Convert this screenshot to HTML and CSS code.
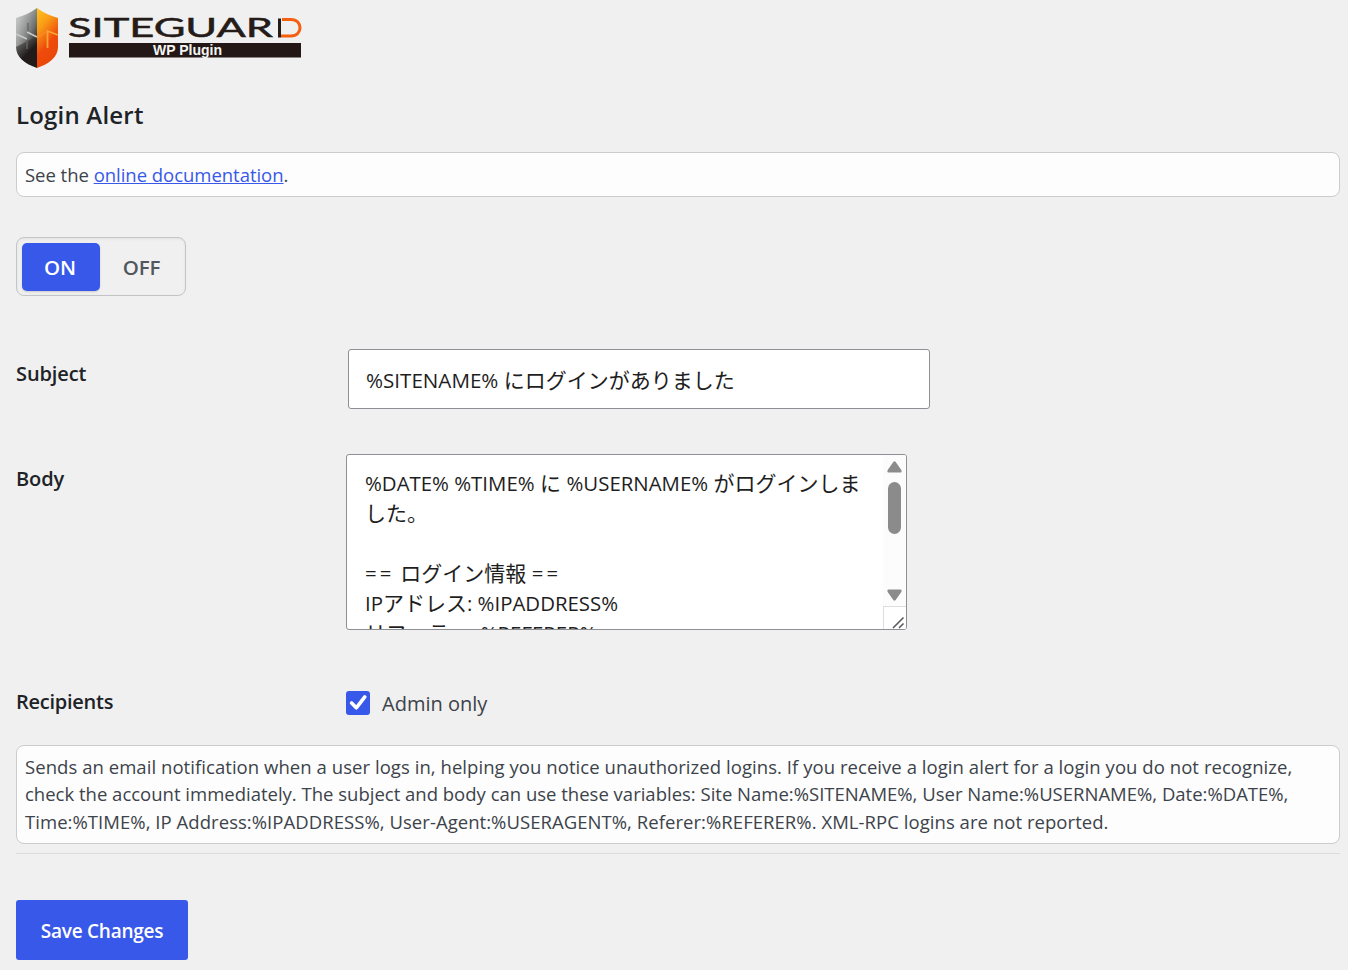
FILE: index.html
```html
<!DOCTYPE html>
<html lang="en">
<head>
	<meta charset="utf-8">
	<title>Login Alert</title>
	<link rel="stylesheet" href="styles.css">
</head>

<body>
	<div class="wrap">
		<svg class="logo" width="288" height="62" viewBox="0 0 288 62">
			<defs>
				<linearGradient id="steel" x1="0" y1="0" x2="0.35" y2="1">
					<stop offset="0" stop-color="#b9bbba"/>
					<stop offset="0.3" stop-color="#8b8d8d"/>
					<stop offset="0.55" stop-color="#646565"/>
					<stop offset="0.85" stop-color="#211c1b"/>
				</linearGradient>
				<linearGradient id="shine" x1="0" y1="0" x2="1" y2="0">
					<stop offset="0" stop-color="#fff" stop-opacity="0.4"/>
					<stop offset="1" stop-color="#fff" stop-opacity="0"/>
				</linearGradient>
				<linearGradient id="flame" x1="0" y1="0" x2="0.4" y2="1">
					<stop offset="0" stop-color="#ffc51c"/>
					<stop offset="0.35" stop-color="#f99a16"/>
					<stop offset="0.7" stop-color="#ee4b0d"/>
					<stop offset="1" stop-color="#ea4608"/>
				</linearGradient>
			</defs>
			<path fill="url(#steel)" d="M21 0C14 5 7 8 0 10V39C0 49 9 56 21 60Z"/>
			<path fill="url(#shine)" d="M21 0C14 5 7 8 0 10V39L21 28Z"/>
			<path fill="url(#flame)" d="M21 0C28 5 35 8 42 10V39C42 49 33 56 21 60Z"/>
			<path fill="none" stroke="#666" stroke-width="1.4" d="M12 15V25M11 30V41"/>
			<path fill="none" stroke="#c8caca" stroke-width="1.6" d="M0 26L11 31M11 24L21 29"/>
			<path fill="none" stroke="#f9a533" stroke-width="1.8" d="M31.500 40V23L42 27"/>
			<path fill="none" stroke="#fb8a2b" stroke-width="1.300" d="M22 29L31 23.500"/>
			<text class="logo-name" x="52" y="29" textLength="205" lengthAdjust="spacingAndGlyphs">SITEGUAR</text>
			<path fill="none" stroke="#251b18" stroke-width="3" d="M263.500 10.500V29.500"/>
			<path fill="none" stroke="#f4600f" stroke-width="3" d="M266 11.500H275C287 11.500 287 28 275 28H265"/>
			<rect x="53" y="35" width="232" height="14.500" fill="#231815"/>
			<text class="logo-sub" x="137" y="47" textLength="69" lengthAdjust="spacingAndGlyphs">WP Plugin</text>
		</svg>

		<h1>Login Alert</h1>

		<div class="description doc">See the <a href="#">online documentation</a>.</div>

		<div class="switch">
			<button type="button" class="switch-btn active">ON</button>
			<button type="button" class="switch-btn">OFF</button>
		</div>

		<div class="row row-subject">
			<div class="label">Subject</div>
			<div class="subject" role="textbox"><span class="latin">%SITENAME%</span> にログインがありました</div>
		</div>

		<div class="row row-body">
			<div class="label">Body</div>
			<div class="textarea">
				<div class="textarea-text" role="textbox"><span class="latin">%DATE% %TIME%</span> に <span class="latin">%USERNAME%</span> がログインしま<br>した。<br><br><span class="latin rule">==</span> ログイン情報 <span class="latin rule">==</span><br><span class="latin">IP</span>アドレス<span class="latin">: %IPADDRESS%</span><br>リファラー<span class="latin">: %REFERER%</span></div>
				<div class="scrollbar">
					<svg width="15" height="12" viewBox="0 0 15 12"><path fill="#8b8b8b" d="M6.300 1Q7.500 -0.300 8.700 1L14.300 9Q15.200 11.500 13.500 11.500H1.500Q-0.200 11.500 0.700 9Z"/></svg>
					<div class="thumb"></div>
					<svg class="down" width="15" height="12" viewBox="0 0 15 12"><path fill="#8b8b8b" d="M6.300 11Q7.500 12.300 8.700 11L14.300 3Q15.200 0.500 13.500 0.500H1.500Q-0.200 0.500 0.700 3Z"/></svg>
					<div class="corner">
						<svg width="13" height="13" viewBox="0 0 13 13"><path fill="none" stroke="#555" stroke-width="1.500" d="M1 12L11.500 1.500M7 12L11.500 7.500"/></svg>
					</div>
				</div>
			</div>
		</div>

		<div class="row row-recipients">
			<div class="label">Recipients</div>
			<label class="check">
				<span class="checkbox">
					<svg width="24" height="24" viewBox="0 0 24 24"><path fill="none" stroke="#fff" stroke-width="3.600" d="M5.600 12L10.300 16.800L18.800 5.800" stroke-linecap="round" stroke-linejoin="round"/></svg>
				</span>
				<span class="check-text">Admin only</span>
			</label>
		</div>

		<div class="description help"><span class="first-line">Sends an email notification when a user logs in, helping you notice unauthorized logins. If you receive a login alert for a login you do not recognize,</span><br>check the account immediately. The subject and body can use these variables: Site Name:%SITENAME%, User Name:%USERNAME%, Date:%DATE%,<br><span class="last-line">Time:%TIME%, IP Address:%IPADDRESS%, User-Agent:%USERAGENT%, Referer:%REFERER%. XML-RPC logins are not reported.</span></div>

		<hr>

		<button type="submit" class="save">Save Changes</button>
	</div>
</body>
</html>
```
FILE: styles.css
```css
body {
	margin: 0;
	background: #f0f0f0;
	color: #3c434a;
	font-family: "Open Sans", "Noto Sans CJK JP", sans-serif;
	font-size: 18.5px;
}

.wrap {
	padding: 8px 8px 0 16px;
}

.logo {
	display: block;
}

.logo-name {
	font-family: Lato, sans-serif;
	font-size: 26.5px;
	fill: #251b18;
	stroke: #251b18;
	stroke-width: 0.5px;
}

.logo-sub {
	font-family: "Liberation Sans", sans-serif;
	font-size: 14px;
	font-weight: bold;
	fill: #f4f4f4;
}

h1 {
	margin: 27px 0 0;
	color: #1d2327;
	font-size: 24px;
	font-weight: 600;
	line-height: 36px;
	letter-spacing: 0.2px;
}

.description {
	box-sizing: border-box;
	padding: 8px;
	background: #fdfdfd;
	border: 1px solid #ccc;
	border-radius: 8px;
	line-height: 27.4px;
	white-space: nowrap;
}

.doc {
	height: 45px;
	margin-top: 19px;
	letter-spacing: -0.03px;
}

a {
	color: #3858e9;
}

.switch {
	display: flex;
	box-sizing: border-box;
	width: 170px;
	height: 59px;
	margin-top: 40px;
	padding: 5px;
	border: 1px solid #c3c4c7;
	border-radius: 8px;
	box-shadow: inset 0 1px 3px rgba(0, 0, 0, 0.06);
}

.switch-btn {
	width: 78px;
	height: 48px;
	padding: 0 0 0 5px;
	border: none;
	border-radius: 5px;
	background: none;
	color: #50575e;
	font: 600 20.5px "Open Sans", sans-serif;
	letter-spacing: -0.2px;
}

.switch-btn.active {
	padding: 0 2px 0 0;
	background: #3858e9;
	color: #fff;
	letter-spacing: 0;
	box-shadow: 0 1px 2px rgba(0, 0, 0, 0.15);
}

.row {
	display: flex;
	align-items: flex-start;
}

.label {
	width: 330px;
	color: #1d2327;
	font-size: 20px;
	font-weight: 600;
	line-height: 28px;
	letter-spacing: -0.1px;
}

.row-subject {
	margin-top: 53px;
}

.row-subject .label {
	width: 332px;
	padding-top: 11px;
}

.subject {
	box-sizing: border-box;
	width: 582px;
	height: 60px;
	padding: 1px 17px;
	background: #fff;
	border: 1px solid #8c8f94;
	border-radius: 3px;
	color: #1e1e1e;
	font-size: 21px;
	line-height: 58px;
}

.subject .latin {
	font-size: 20.6px;
}

.latin {
	font-size: 20.4px;
}

.textarea-text .rule {
	letter-spacing: 3.2px;
}

.row-body {
	margin-top: 45px;
}

.row-body .label {
	padding-top: 11px;
}

.textarea {
	display: flex;
	box-sizing: border-box;
	width: 561px;
	height: 176px;
	background: #fff;
	border: 1px solid #8c8f94;
	border-radius: 3px;
	overflow: hidden;
}

.textarea-text {
	flex: 1;
	padding: 13px 0 0 18px;
	color: #1e1e1e;
	font-size: 21px;
	line-height: 30px;
	white-space: nowrap;
}

.scrollbar {
	display: flex;
	flex-direction: column;
	align-items: center;
	width: 23px;
	padding-top: 6px;
	background: #fcfcfc;
}

.thumb {
	width: 13px;
	height: 52px;
	margin-top: 9px;
	border-radius: 7px;
	background: #8b8b8b;
}

.down {
	margin-top: auto;
}

.corner {
	display: flex;
	align-items: flex-end;
	justify-content: flex-end;
	box-sizing: border-box;
	width: 23px;
	height: 23px;
	margin-top: 5px;
	border-top: 1px solid #ddd;
	border-left: 1px solid #ddd;
	background: #fff;
}

.corner svg {
	margin: 0 1px 0 0;
}

.row-recipients {
	margin-top: 57px;
}

.row-recipients .label {
	padding-top: 1px;
	letter-spacing: -0.25px;
}

.check {
	display: flex;
	gap: 12px;
	padding-top: 4px;
}

.checkbox {
	width: 24px;
	height: 24px;
	border-radius: 3px;
	background: #3858e9;
}

.check-text {
	font-size: 20px;
	line-height: 25px;
}

.help {
	height: 99px;
	margin-top: 29px;
	padding-top: 7px;
}

.first-line {
	letter-spacing: 0.055px;
}

.last-line {
	letter-spacing: 0.05px;
}

hr {
	height: 1px;
	margin: 9px 0 0;
	border: none;
	background: #dcdcde;
}

.save {
	display: block;
	width: 172px;
	height: 60px;
	margin-top: 46px;
	padding: 2px 0 0;
	border: none;
	border-radius: 3px;
	background: #3858e9;
	color: #fff;
	font: 600 19px "Open Sans", sans-serif;
	letter-spacing: -0.25px;
}
```
